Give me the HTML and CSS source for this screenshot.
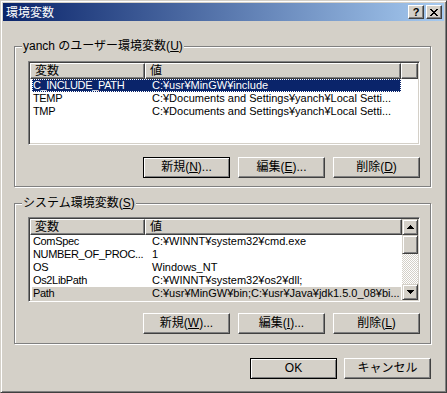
FILE: index.html
```html
<!DOCTYPE html>
<html lang="ja">

<head>
    <meta charset="UTF-8">
    <title>環境変数</title>
    <link rel="stylesheet" href="styles.css">
</head>

<body>
    <div class="window">
        <div class="titlebar">
            <span class="title">環境変数</span>
            <div class="caption-buttons">
                <span class="caption-btn help">?</span>
                <span class="caption-btn">
                    <svg width="8" height="7" viewBox="0 0 8 7" shape-rendering="crispEdges">
                        <path d="M0 0h2v1H0zM6 0h2v1H6zM1 1h2v1H1zM5 1h2v1H5zM2 2h4v1H2zM3 3h2v1H3zM2 4h4v1H2zM1 5h2v1H1zM5 5h2v1H5zM0 6h2v1H0zM6 6h2v1H6z" fill="#000"/>
                    </svg>
                </span>
            </div>
        </div>

        <div class="dialog">
            <!-- ユーザー環境変数 -->
            <div class="group">
                <span class="group-label">yanch のユーザー環境変数(<u>U</u>)</span>
                <div class="listview">
                    <div class="lv-main">
                        <div class="lv-header">
                            <div class="hcell col-name">変数</div>
                            <div class="hcell col-value">値</div>
                            <div class="hcell col-fill"></div>
                        </div>
                        <div class="lv-row selected">
                            <span class="cell-name">C_INCLUDE_PATH</span>
                            <span class="cell-value">C:¥usr¥MinGW¥include</span>
                        </div>
                        <div class="lv-row">
                            <span class="cell-name">TEMP</span>
                            <span class="cell-value">C:¥Documents and Settings¥yanch¥Local Setti...</span>
                        </div>
                        <div class="lv-row">
                            <span class="cell-name">TMP</span>
                            <span class="cell-value">C:¥Documents and Settings¥yanch¥Local Setti...</span>
                        </div>
                    </div>
                </div>
                <div class="button-row">
                    <button class="btn default">新規(<u>N</u>)...</button>
                    <button class="btn">編集(<u>E</u>)...</button>
                    <button class="btn">削除(<u>D</u>)</button>
                </div>
            </div>

            <!-- システム環境変数 -->
            <div class="group">
                <span class="group-label">システム環境変数(<u>S</u>)</span>
                <div class="listview system">
                    <div class="lv-main">
                        <div class="lv-header">
                            <div class="hcell col-name">変数</div>
                            <div class="hcell col-value">値</div>
                        </div>
                        <div class="lv-row">
                            <span class="cell-name">ComSpec</span>
                            <span class="cell-value">C:¥WINNT¥system32¥cmd.exe</span>
                        </div>
                        <div class="lv-row">
                            <span class="cell-name">NUMBER_OF_PROC...</span>
                            <span class="cell-value">1</span>
                        </div>
                        <div class="lv-row">
                            <span class="cell-name">OS</span>
                            <span class="cell-value">Windows_NT</span>
                        </div>
                        <div class="lv-row">
                            <span class="cell-name">Os2LibPath</span>
                            <span class="cell-value">C:¥WINNT¥system32¥os2¥dll;</span>
                        </div>
                        <div class="lv-row inactive">
                            <span class="cell-name">Path</span>
                            <span class="cell-value">C:¥usr¥MinGW¥bin;C:¥usr¥Java¥jdk1.5.0_08¥bi...</span>
                        </div>
                    </div>
                    <div class="scrollbar">
                        <div class="sb-btn">
                            <svg width="7" height="4" viewBox="0 0 7 4" shape-rendering="crispEdges">
                                <path d="M3 0h1v1H3zM2 1h3v1H2zM1 2h5v1H1zM0 3h7v1H0z" fill="#000"/>
                            </svg>
                        </div>
                        <div class="sb-thumb"></div>
                        <div class="sb-track"></div>
                        <div class="sb-btn">
                            <svg width="7" height="4" viewBox="0 0 7 4" shape-rendering="crispEdges">
                                <path d="M0 0h7v1H0zM1 1h5v1H1zM2 2h3v1H2zM3 3h1v1H3z" fill="#000"/>
                            </svg>
                        </div>
                    </div>
                </div>
                <div class="button-row">
                    <button class="btn">新規(<u>W</u>)...</button>
                    <button class="btn">編集(<u>I</u>)...</button>
                    <button class="btn">削除(<u>L</u>)</button>
                </div>
            </div>

            <div class="dialog-buttons">
                <button class="btn default">OK</button>
                <button class="btn">キャンセル</button>
            </div>
        </div>
    </div>
</body>

</html>
```

FILE: styles.css
```css
* {
    box-sizing: border-box;
}

body {
    margin: 0;
    font-family: "Liberation Sans", "Noto Sans CJK JP", sans-serif;
    font-size: 12px;
    color: #000;
    background-color: #d4d0c8;
}

.window {
    width: 447px;
    height: 393px;
    padding: 2px;
    background-color: #d4d0c8;
    border: 1px solid;
    border-color: #d4d0c8 #404040 #404040 #d4d0c8;
    box-shadow: inset 1px 1px #fff, inset -1px -1px #808080;
}

/* タイトルバー */
.titlebar {
    height: 18px;
    display: flex;
    align-items: center;
    justify-content: space-between;
    padding: 0 2px 0 3px;
    background: linear-gradient(to right, #0a246a, #a6caf0);
}

.title {
    color: #fff;
    font-family: "Noto Sans CJK JP", sans-serif;
    font-size: 12px;
    line-height: 14px;
}

.caption-buttons {
    display: flex;
    gap: 2px;
}

.caption-btn {
    width: 16px;
    height: 14px;
    display: flex;
    align-items: center;
    justify-content: center;
    background-color: #d4d0c8;
    border: 1px solid;
    border-color: #fff #404040 #404040 #fff;
    box-shadow: inset -1px -1px #808080;
}

.caption-btn.help {
    font-size: 11px;
    font-weight: bold;
    line-height: 12px;
}

/* ダイアログ本体 */
.dialog {
    padding: 25px 0 0 11px;
}

.group {
    position: relative;
    width: 417px;
    padding: 14px 0 8px 13px;
    border: 1px solid #808080;
    box-shadow: inset 1px 1px #fff, 1px 1px #fff;
}

.group + .group {
    margin-top: 16px;
    padding-top: 13px;
    padding-bottom: 9px;
}

.group-label {
    position: absolute;
    top: -8px;
    left: 7px;
    padding: 0 1px;
    line-height: 14px;
    background-color: #d4d0c8;
}

/* リストビュー */
.listview {
    display: flex;
    width: 392px;
    height: 84px;
    padding: 1px;
    background-color: #fff;
    border: 1px solid;
    border-color: #808080 #fff #fff #808080;
    box-shadow: inset 1px 1px #404040, inset -1px -1px #d4d0c8;
}

.listview.system {
    height: 85px;
}

.lv-main {
    flex: 1;
    overflow: hidden;
}

.lv-header {
    display: flex;
    height: 16px;
}

.hcell {
    height: 16px;
    padding-left: 4px;
    line-height: 14px;
    background-color: #d4d0c8;
    border: 1px solid;
    border-color: #fff #404040 #404040 #fff;
    box-shadow: inset -1px -1px #808080;
}

.col-name {
    width: 115px;
}

.col-value {
    width: 256px;
}

.col-fill {
    flex: 1;
    padding: 0;
}

.system .col-value {
    flex: 1;
}

.lv-row {
    display: flex;
    width: 369px;
    height: 13px;
    margin-left: 2px;
    font-size: 11px;
    line-height: 13px;
    white-space: nowrap;
}

.cell-name {
    width: 113px;
    padding-left: 1px;
    letter-spacing: -0.35px;
    overflow: hidden;
}

.cell-value {
    flex: 1;
    padding-left: 7px;
    overflow: hidden;
}

.lv-row.selected {
    color: #fff;
    background-color: #0a246a;
    outline: 1px dotted #fff;
    outline-offset: -1px;
}

.lv-row.inactive {
    background-color: #d4d0c8;
}

/* スクロールバー */
.scrollbar {
    width: 16px;
    display: flex;
    flex-direction: column;
}

.sb-btn,
.sb-thumb {
    background-color: #d4d0c8;
    border: 1px solid;
    border-color: #d4d0c8 #404040 #404040 #d4d0c8;
    box-shadow: inset 1px 1px #fff, inset -1px -1px #808080;
}

.sb-btn {
    height: 16px;
    display: flex;
    align-items: center;
    justify-content: center;
}

.sb-thumb {
    height: 19px;
}

.sb-track {
    flex: 1;
    background-image: conic-gradient(#fff 25%, #d4d0c8 0 50%, #fff 0 75%, #d4d0c8 0);
    background-size: 2px 2px;
}

/* ボタン */
.button-row {
    display: flex;
    justify-content: flex-end;
    gap: 8px;
    width: 392px;
    margin-top: 12px;
}

.group + .group .button-row {
    margin-top: 11px;
}

.dialog-buttons {
    display: flex;
    justify-content: flex-end;
    gap: 7px;
    width: 417px;
    margin-top: 14px;
}

.btn {
    width: 87px;
    height: 21px;
    padding: 0;
    font-family: inherit;
    font-size: 12px;
    line-height: 19px;
    color: #000;
    background-color: #d4d0c8;
    border: 1px solid;
    border-color: #fff #404040 #404040 #fff;
    box-shadow: inset -1px -1px #808080;
}

.btn.default {
    border-color: #000;
    box-shadow: inset 1px 1px #fff, inset -1px -1px #808080;
}
```
